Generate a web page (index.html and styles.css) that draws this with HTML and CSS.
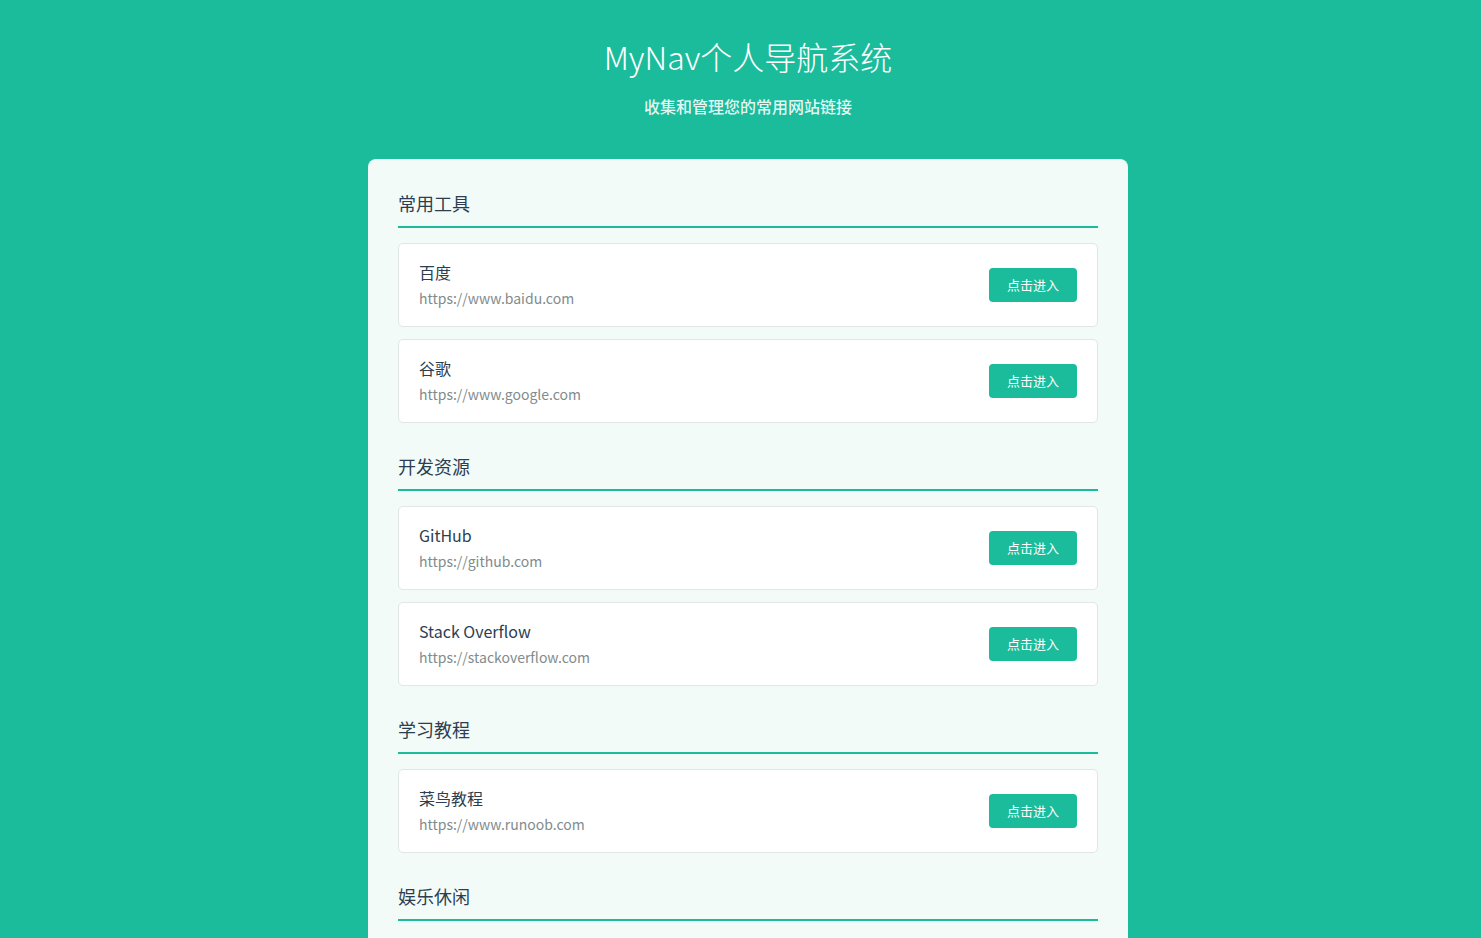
FILE: index.html
```html
<!DOCTYPE html>
<html lang="zh-CN">
<head>
<meta charset="utf-8">
<title>MyNav个人导航系统</title>
<link rel="stylesheet" href="styles.css">
</head>
<body>
<header class="header">
  <h1 class="title">MyNav个人导航系统</h1>
  <p class="subtitle">收集和管理您的常用网站链接</p>
</header>
<main class="panel">
  <section class="group">
    <h2 class="group-title">常用工具</h2>
    <div class="site">
      <div class="site-info"><div class="site-name">百度</div><div class="site-url">https://www.baidu.com</div></div>
      <a class="btn" href="#">点击进入</a>
    </div>
    <div class="site">
      <div class="site-info"><div class="site-name">谷歌</div><div class="site-url">https://www.google.com</div></div>
      <a class="btn" href="#">点击进入</a>
    </div>
  </section>
  <section class="group">
    <h2 class="group-title">开发资源</h2>
    <div class="site">
      <div class="site-info"><div class="site-name">GitHub</div><div class="site-url">https://github.com</div></div>
      <a class="btn" href="#">点击进入</a>
    </div>
    <div class="site">
      <div class="site-info"><div class="site-name">Stack Overflow</div><div class="site-url">https://stackoverflow.com</div></div>
      <a class="btn" href="#">点击进入</a>
    </div>
  </section>
  <section class="group">
    <h2 class="group-title">学习教程</h2>
    <div class="site">
      <div class="site-info"><div class="site-name">菜鸟教程</div><div class="site-url">https://www.runoob.com</div></div>
      <a class="btn" href="#">点击进入</a>
    </div>
  </section>
  <section class="group">
    <h2 class="group-title">娱乐休闲</h2>
  </section>
</main>
</body>
</html>
```
FILE: styles.css
```css
* { box-sizing: border-box; }
html, body { margin: 0; padding: 0; }
body {
  background: #1abc9c;
  font-family: "Noto Sans CJK SC", "Noto Sans", sans-serif;
  color: #2c3e50;
  padding-left: 15px;
}
.header {
  text-align: center;
  color: #fff;
  padding-top: 36px;
}
.title {
  margin: 0;
  font-size: 32px;
  line-height: 40px;
  font-weight: 300;
}
.subtitle {
  margin: 19px 0 0;
  font-size: 16px;
  line-height: 22px;
  font-weight: 500;
  color: rgba(255,255,255,0.9);
}
.panel {
  width: 760px;
  margin: 42px auto 0;
  background: #f3fbf9;
  border-radius: 8px;
  padding: 30px 30px 30px;
}
.group { margin-bottom: 29px; }
.group-title {
  margin: 0 0 15px;
  font-size: 18px;
  line-height: 28px;
  font-weight: 400;
  color: #2c3e50;
  padding-bottom: 9px;
  border-bottom: 2px solid #1abc9c;
}
.site {
  display: flex;
  align-items: center;
  justify-content: space-between;
  background: #fff;
  border: 1px solid #e3e6e6;
  border-radius: 5px;
  padding: 16px 20px 17px;
  margin-bottom: 12px;
}
.site-name {
  font-size: 16px;
  line-height: 24px;
  color: #2c3e50;
  margin-bottom: 3px;
}
.site-url {
  font-size: 14px;
  line-height: 22px;
  color: #7f8c8d;
}
.btn {
  display: inline-flex;
  align-items: center;
  justify-content: center;
  width: 88px;
  height: 34px;
  background: #1abc9c;
  color: #fff;
  border-radius: 4px;
  font-size: 13px;
  text-decoration: none;
}
```
